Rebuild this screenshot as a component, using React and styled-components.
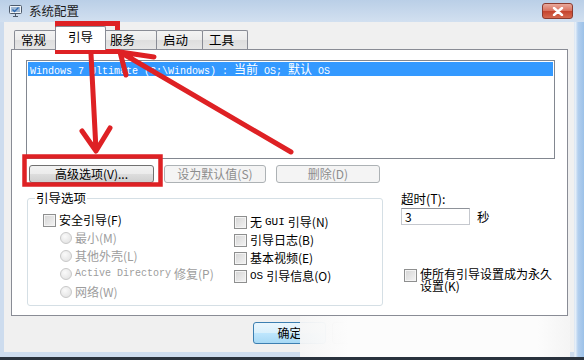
import React from 'react';
import styled, { createGlobalStyle } from 'styled-components';

const Global = createGlobalStyle`
  html, body { margin: 0; padding: 0; background: #fff; }
  body { width: 584px; height: 360px; overflow: hidden; }
`;

const cjk = '"Noto Sans CJK SC", "Liberation Sans", sans-serif';
const mono = '"Liberation Mono", "Noto Sans CJK SC", monospace';

const Window = styled.div`
  position: relative;
  width: 584px;
  height: 360px;
  overflow: hidden;
  display: flex;
  flex-direction: column;
  font-family: ${cjk};
  font-size: 12px;
  color: #000;
  background: #cddcee;
`;

const TitleBar = styled.div`
  height: 22px;
  flex: none;
  display: flex;
  align-items: center;
  padding-left: 8px;
  background: linear-gradient(#bacfe7, #d2e0f0);
`;

const Title = styled.span`
  margin-left: 6px;
  font-size: 12.5px;
  line-height: 14px;
  color: #1b1b1b;
`;

const CloseBtn = styled.div`
  margin-left: auto;
  margin-right: 11px;
  align-self: flex-start;
  margin-top: 3px;
  width: 31px;
  height: 16px;
  box-sizing: border-box;
  border: 1px solid #8c3b2f;
  border-radius: 3px;
  background: linear-gradient(#e9a99b, #d8705d 50%, #c4432d 51%, #d5694f);
  display: flex;
  align-items: center;
  justify-content: center;
`;

const Frame = styled.div`
  flex: 1;
  display: flex;
  padding: 0 10px 5px 4px;
  border-bottom: 3px solid #29323d;
  background: linear-gradient(
    to right,
    #cddcee 0,
    #cddcee 574px,
    #eef4fa 575px,
    #b3cfee 578px,
    #9cc1e8 584px
  );
`;

const Client = styled.div`
  flex: 1;
  background: #f0f0f0;
  padding: 4px 6px 0 7px;
  display: flex;
  flex-direction: column;
`;

const TabRow = styled.div`
  height: 24px;
  display: flex;
  align-items: flex-end;
  padding-left: 3px;
  margin-bottom: -1px;
  position: relative;
  z-index: 1;
`;

const Tab = styled.div`
  box-sizing: border-box;
  width: ${(p) => (p.$active ? p.$w + 4 : p.$w)}px;
  height: ${(p) => (p.$active ? 24 : 19)}px;
  margin: ${(p) => (p.$active ? '0 -2px 0 -2px' : '0 0 1px -1px')};
  border: 1px solid #898c95;
  border-bottom: none;
  border-radius: 2px 2px 0 0;
  background: ${(p) =>
    p.$active ? '#fff' : 'linear-gradient(#f3f3f3, #ebebeb 50%, #dedede 51%, #e6e6e6)'};
  position: relative;
  z-index: ${(p) => (p.$active ? 2 : 1)};
  display: flex;
  align-items: center;
  justify-content: ${(p) => (p.$active ? 'center' : 'flex-start')};
  padding: ${(p) => (p.$active ? '0 0 3px 0' : '0 0 0 6px')};
  font-size: 12.5px;
  line-height: 14px;
  &:first-child { margin-left: 0; }
`;

const Panel = styled.div`
  box-sizing: border-box;
  height: 267px;
  border: 1px solid #898c95;
  background: #fff;
  padding: 10px 0 0 14px;
`;

const ListBox = styled.div`
  box-sizing: border-box;
  width: 529px;
  height: 99px;
  border: 1px solid #828790;
  padding: 1px;
`;

const ListRow = styled.div`
  height: 14px;
  background: #3399ff;
  color: #fff;
  padding-left: 2px;
  font-family: ${mono};
  font-size: 10px;
  line-height: 14px;
  white-space: pre;
`;

const Wide = styled.span`
  font-family: ${cjk};
  font-size: 12px;
`;

const ButtonRow = styled.div`
  display: flex;
  gap: 10px;
  margin: 6px 0 0 3px;
`;

const Button = styled.div`
  box-sizing: border-box;
  width: ${(p) => p.$w}px;
  height: ${(p) => p.$h || 18}px;
  border: 1px solid ${(p) => (p.$disabled ? '#adb2b5' : p.$default ? '#3c7fb1' : '#707070')};
  border-radius: 3px;
  background: ${(p) =>
    p.$disabled
      ? '#f4f4f4'
      : p.$default
      ? 'linear-gradient(#eaf6fd, #d9f0fc 50%, #bee6fd 51%, #a7d9f5)'
      : 'linear-gradient(#f2f2f2, #ebebeb 50%, #dddddd 51%, #cfcfcf)'};
  color: ${(p) => (p.$disabled ? '#8d8d8d' : '#000')};
  display: flex;
  align-items: center;
  justify-content: center;
  font-size: 12px;
  line-height: 14px;
  white-space: nowrap;
`;

const Lower = styled.div`
  display: flex;
  gap: 18px;
  margin: 8px 0 0 1px;
`;

const Group = styled.fieldset`
  box-sizing: border-box;
  width: 356px;
  height: 115px;
  margin: 0;
  min-width: 0;
  border: 1px solid #d5dfe5;
  border-radius: 3px;
  padding: 0 8px 3px 7px;
`;

const Legend = styled.legend`
  padding: 0 1px;
  font-size: 12.5px;
  line-height: 14px;
`;

const Options = styled.div`
  display: flex;
  padding: 6px 0 0 8px;
`;

const Column = styled.div`
  display: flex;
  flex-direction: column;
  width: ${(p) => p.$w}px;
  padding-top: ${(p) => p.$top || 0}px;
`;

const Row = styled.div`
  height: 18px;
  display: flex;
  align-items: center;
  gap: 3px;
  padding-left: ${(p) => p.$indent || 0}px;
  color: ${(p) => (p.$disabled ? '#9d9d9d' : '#000')};
  line-height: 14px;
  white-space: nowrap;
`;

const Box = styled.span`
  flex: none;
  box-sizing: border-box;
  width: 13px;
  height: 13px;
  border: 1px solid #8e8f8f;
  background: linear-gradient(135deg, #d4d4d4, #f4f4f4);
  box-shadow: inset 0 0 0 1px #f4f4f4;
`;

const Radio = styled.span`
  flex: none;
  box-sizing: border-box;
  width: 12px;
  height: 12px;
  border-radius: 50%;
  border: 1px solid #c8c8c8;
  background: radial-gradient(circle at 40% 35%, #fafafa, #dedede);
`;

const Mono = styled.span`
  font-family: ${mono};
  font-size: ${(p) => p.$size || 10}px;
`;

const Side = styled.div`
  display: flex;
  flex-direction: column;
`;

const FieldLabel = styled.div`
  margin-top: 1px;
  line-height: 14px;
  font-size: 12.5px;
`;

const InputRow = styled.div`
  display: flex;
  align-items: center;
  gap: 7px;
  margin-top: 1px;
  font-size: 12.5px;
`;

const Input = styled.div`
  box-sizing: border-box;
  width: 69px;
  height: 17px;
  border: 1px solid #c5c8ce;
  border-top-color: #8e9299;
  background: #fff;
  padding-left: 3px;
  line-height: 15px;
  font-size: 12px;
`;

const PermRow = styled.div`
  display: flex;
  align-items: flex-start;
  gap: 3px;
  margin-top: 42px;
  padding-left: 3px;
  ${Box} { margin-top: 1px; }
`;

const PermText = styled.div`
  width: 134px;
  line-height: 12px;
  font-size: 12px;
`;

const DialogButtons = styled.div`
  display: flex;
  justify-content: flex-end;
  gap: 6px;
  margin-top: 6px;
  padding-right: 5px;
`;

const Watermark = styled.div`
  position: absolute;
  left: 300px;
  top: 316px;
  width: 270px;
  height: 41px;
  background: linear-gradient(
    to right,
    rgba(246, 246, 246, 0.94),
    #fcfcfc 18%,
    #fcfcfc 88%,
    #f4f4f4
  );
`;

const Annotations = styled.svg`
  position: absolute;
  left: 0;
  top: 0;
  pointer-events: none;
`;

const AppIcon = () => (
  <svg width="15" height="14" viewBox="0 0 15 14">
    <rect x="1.5" y="1.5" width="12" height="8" rx="1" fill="#eef3f8" stroke="#4d5a6b" />
    <rect x="3" y="3" width="9" height="5" fill="#9fb8d4" />
    <path d="M5 12.5h5M7.5 10v2.5" stroke="#4d5a6b" />
    <path d="M4.5 5.5l2 2 4-4" stroke="#2c6ab3" fill="none" strokeWidth="1.3" />
  </svg>
);

const CloseGlyph = () => (
  <svg width="12" height="9" viewBox="0 0 12 9">
    <path d="M2 1l8 7M10 1L2 8" stroke="#fff" strokeWidth="2.4" strokeLinecap="round" />
  </svg>
);

const tabs = [
  { label: '常规', w: 43 },
  { label: '引导', w: 47, active: true },
  { label: '服务', w: 54 },
  { label: '启动', w: 47 },
  { label: '工具', w: 46 },
];

const leftOptions = [
  { label: '安全引导(F)', kind: 'check' },
  { label: '最小(M)', kind: 'radio' },
  { label: '其他外壳(L)', kind: 'radio' },
  { label: <><Mono>Active Directory </Mono>修复(P)</>, kind: 'radio' },
  { label: '网络(W)', kind: 'radio' },
];

const rightOptions = [
  <>无 <Mono $size={11}>GUI</Mono> 引导(N)</>,
  '引导日志(B)',
  '基本视频(E)',
  <><Mono $size={11}>OS</Mono> 引导信息(O)</>,
];

const red = '#de2124';

export default function App() {
  return (
    <>
      <Global />
      <Window>
        <TitleBar>
          <AppIcon />
          <Title>系统配置</Title>
          <CloseBtn>
            <CloseGlyph />
          </CloseBtn>
        </TitleBar>
        <Frame>
          <Client>
            <TabRow>
              {tabs.map((t) => (
                <Tab key={t.label} $w={t.w} $active={t.active}>
                  {t.label}
                </Tab>
              ))}
            </TabRow>
            <Panel>
              <ListBox>
                <ListRow>
                  {'Windows 7 Ultimate (C:\\Windows) : '}
                  <Wide>当前</Wide>
                  {' OS; '}
                  <Wide>默认</Wide>
                  {' OS'}
                </ListRow>
              </ListBox>
              <ButtonRow>
                <Button $w={125}>高级选项(V)...</Button>
                <Button $w={102} $disabled>设为默认值(S)</Button>
                <Button $w={104} $disabled>删除(D)</Button>
              </ButtonRow>
              <Lower>
                <Group>
                  <Legend>引导选项</Legend>
                  <Options>
                    <Column $w={191}>
                      {leftOptions.map((o, i) =>
                        o.kind === 'check' ? (
                          <Row key={i}>
                            <Box />
                            {o.label}
                          </Row>
                        ) : (
                          <Row key={i} $indent={17} $disabled>
                            <Radio />
                            {o.label}
                          </Row>
                        )
                      )}
                    </Column>
                    <Column $w={140} $top={2}>
                      {rightOptions.map((label, i) => (
                        <Row key={i}>
                          <Box />
                          {label}
                        </Row>
                      ))}
                    </Column>
                  </Options>
                </Group>
                <Side>
                  <FieldLabel>超时(T):</FieldLabel>
                  <InputRow>
                    <Input>3</Input>
                    秒
                  </InputRow>
                  <PermRow>
                    <Box />
                    <PermText>使所有引导设置成为永久设置(K)</PermText>
                  </PermRow>
                </Side>
              </Lower>
            </Panel>
            <DialogButtons>
              <Button $w={73} $h={22} $default>确定</Button>
              <Button $w={73} $h={22}>取消</Button>
              <Button $w={73} $h={22} $disabled>应用(A)</Button>
              <Button $w={73} $h={22}>帮助</Button>
            </DialogButtons>
          </Client>
        </Frame>
        <Watermark />
        <Annotations width="584" height="360" viewBox="0 0 584 360">
          <g fill="none" stroke={red} strokeWidth="5" strokeLinecap="round" strokeLinejoin="round">
            <rect x="57.5" y="23.5" width="60" height="28" strokeLinecap="butt" strokeLinejoin="miter" />
            <rect x="24.5" y="156.5" width="136" height="28" strokeWidth="4.5" strokeLinecap="butt" strokeLinejoin="miter" />
            <path d="M91 54L96 150M82 131L96 151L110 128" />
            <path d="M291 152L120 52M120 52L154 57M120 52L126 75" />
          </g>
        </Annotations>
      </Window>
    </>
  );
}
